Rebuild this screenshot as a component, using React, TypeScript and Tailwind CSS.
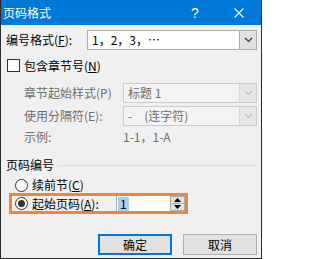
import React from 'react';
import clsx from 'clsx';

function Chevron({ color }: { color: string }) {
  return (
    <svg width="9" height="6" viewBox="0 0 9 6">
      <path d="M1 1l3.5 3.5L8 1" fill="none" stroke={color} strokeWidth="1.2" />
    </svg>
  );
}

function Combo({ value, disabled }: { value: React.ReactNode; disabled?: boolean }) {
  return (
    <div
      className={clsx(
        'flex h-[20px] flex-1 border',
        disabled ? 'border-[#cccccc] bg-[#f4f4f4] text-[#6d6d6d]' : 'border-[#adadad] bg-white text-black'
      )}
    >
      <div className="flex flex-1 items-center pl-[4px] whitespace-pre">{value}</div>
      <div
        className={clsx(
          'flex w-[17px] items-center justify-center border-l',
          disabled ? 'border-[#d6d6d6] bg-[#e6e6e6]' : 'border-[#adadad] bg-[#e1e1e1]'
        )}
      >
        <Chevron color={disabled ? '#bfbfbf' : '#333333'} />
      </div>
    </div>
  );
}

function Radio({ checked }: { checked?: boolean }) {
  return (
    <div className="flex h-[13px] w-[13px] items-center justify-center rounded-full border border-[#333333] bg-white">
      {checked && <div className="h-[7px] w-[7px] rounded-full bg-[#333333]" />}
    </div>
  );
}

export default function App() {
  return (
    <div className="flex h-[259px] w-[262px] flex-col border-x border-b border-[#2b2b2b] bg-[#f0f0f0] font-['Noto_Sans_CJK_SC',sans-serif] text-[12px] leading-none text-black">
      {/* title bar */}
      <div className="flex h-[25px] items-center bg-[#0078d7] text-white">
        <span className="flex-1 pl-[2px]">页码格式</span>
        <span className="flex w-[44px] justify-center font-['Liberation_Sans',sans-serif] text-[14px]">?</span>
        <span className="flex w-[44px] justify-center">
          <svg width="10" height="10" viewBox="0 0 10 10">
            <path d="M0.5 0.5l9 9M9.5 0.5l-9 9" stroke="white" strokeWidth="1.1" />
          </svg>
        </span>
      </div>

      <div className="flex flex-col pl-[5px] pr-[4px]">
        <div className="mt-[5px] flex items-center">
          <span className="w-[81px]">
            编号格式(<u>F</u>):
          </span>
          <Combo value="1，2，3，…" />
        </div>

        <div className="mt-[9px] flex h-[13px] items-center">
          <div className="ml-[1px] h-[13px] w-[13px] border border-[#333333] bg-white" />
          <span className="ml-[4px]">
            包含章节号(<u>N</u>)
          </span>
        </div>

        <div className="mt-[11px] flex items-center text-[#6d6d6d]">
          <span className="ml-[18px] w-[99px]">章节起始样式(P)</span>
          <Combo value="标题 1" disabled />
        </div>

        <div className="mt-[3px] flex items-center text-[#6d6d6d]">
          <span className="ml-[18px] w-[99px]">使用分隔符(E):</span>
          <Combo value="-　(连字符)" disabled />
        </div>

        <div className="mt-[4px] flex h-[14px] items-center text-[#6d6d6d]">
          <span className="ml-[18px] w-[99px]">示例:</span>
          <span>1-1，1-A</span>
        </div>

        <div className="mt-[14px] flex h-[14px] items-center">
          <span>页码编号</span>
          <div className="ml-[4px] h-px flex-1 bg-[#dcdcdc]" />
        </div>

        <div className="mt-[6px] flex h-[14px] items-center pl-[9px]">
          <Radio />
          <span className="ml-[4px]">
            续前节(<u>C</u>)
          </span>
        </div>

        <div className="ml-[3px] mt-[1px] flex h-[21px] w-[179px] items-center border-[3px] border-[#ef8536] pl-[3px]">
          <Radio checked />
          <span className="ml-[4px] w-[84px]">
            起始页码(<u>A</u>):
          </span>
          <div className="flex h-full flex-1 border-l border-[#adadad] bg-white">
            <div className="flex flex-1 items-center pl-[1px]">
              <span className="bg-[#a8cff2] px-[2px] py-[1px]">1</span>
            </div>
            <div className="flex w-[15px] flex-col border border-[#adadad] bg-[#e1e1e1]">
              <div className="flex flex-1 items-center justify-center border-b border-[#adadad]">
                <svg width="7" height="4" viewBox="0 0 7 4">
                  <path d="M3.5 0L7 4H0z" fill="#000" />
                </svg>
              </div>
              <div className="flex flex-1 items-center justify-center">
                <svg width="7" height="4" viewBox="0 0 7 4">
                  <path d="M0 0h7L3.5 4z" fill="#000" />
                </svg>
              </div>
            </div>
          </div>
        </div>

        <div className="mt-[20px] flex justify-end gap-[11px]">
          <button className="flex h-[21px] w-[74px] items-center justify-center border-2 border-[#0078d7] bg-[#e1e1e1]">
            确定
          </button>
          <button className="flex h-[21px] w-[74px] items-center justify-center border border-[#adadad] bg-[#e1e1e1]">
            取消
          </button>
        </div>
      </div>
    </div>
  );
}
